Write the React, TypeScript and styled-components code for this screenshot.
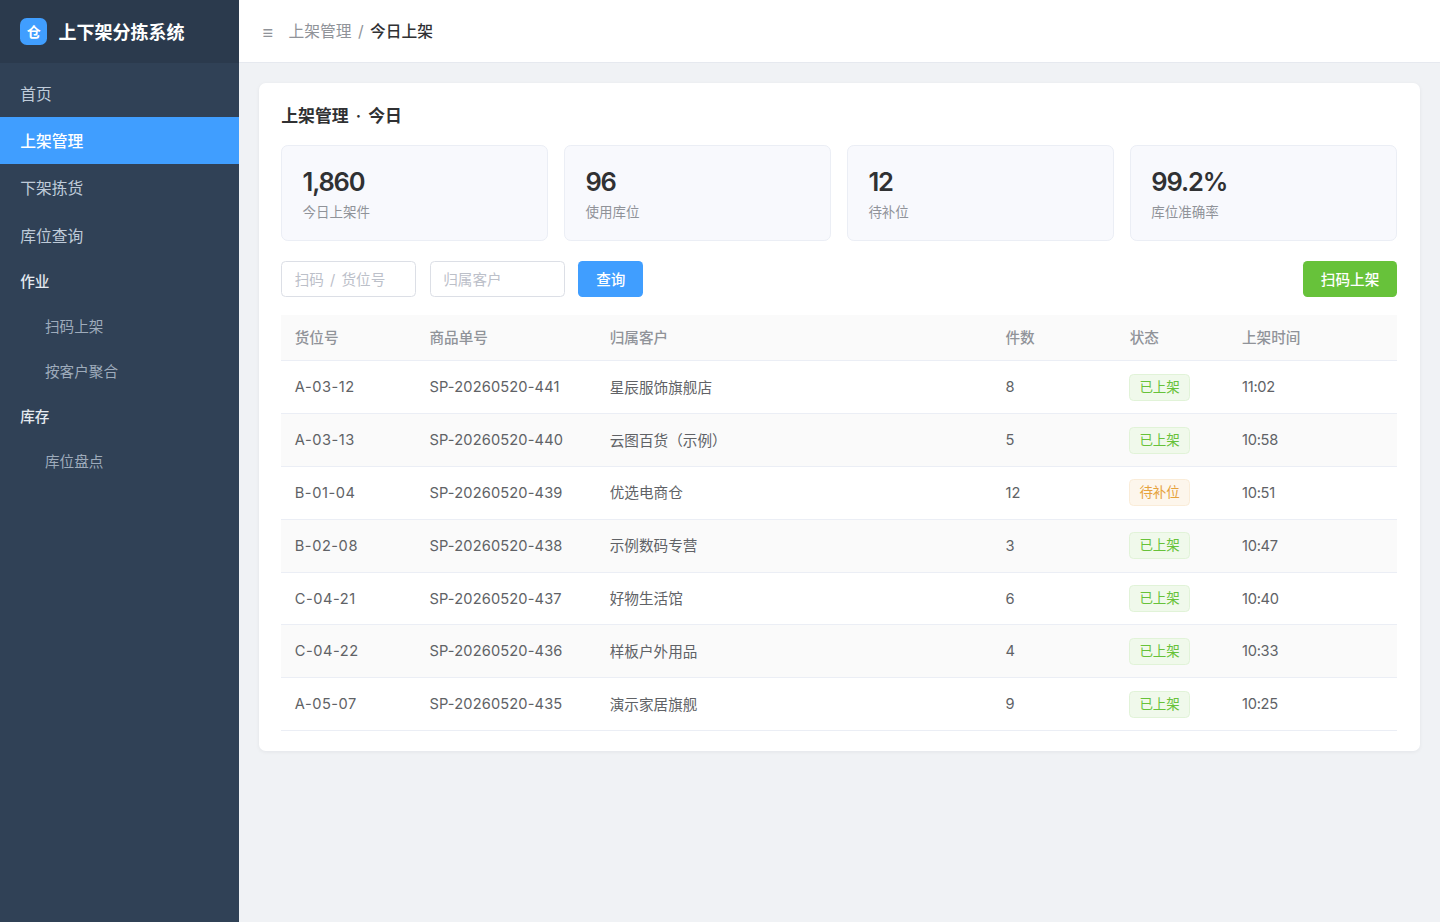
import React from 'react';
import styled, { createGlobalStyle, css } from 'styled-components';

const GlobalStyle = createGlobalStyle`
  *, *::before, *::after { box-sizing: border-box; }
  body {
    margin: 0;
    background: #f0f2f5;
    color: #303133;
    font-family: Inter, "Noto Sans CJK SC", sans-serif;
    font-size: 15.75px;
    -webkit-font-smoothing: antialiased;
  }
`;

const Layout = styled.div`
  display: flex;
  height: 922px;
  overflow: hidden;
`;

const Sidebar = styled.aside`
  flex: 0 0 238.5px;
  background: #304156;
`;

const Brand = styled.div`
  display: flex;
  align-items: center;
  gap: 11.25px;
  height: 63px;
  padding-left: 20.25px;
  background: #2b3a4d;
  color: #fff;
  font-size: 18px;
  font-weight: 600;
  line-height: 27px;
`;

const BrandName = styled.span`
  padding-top: 1.5px;
`;

const BrandMark = styled.span`
  width: 27px;
  height: 27px;
  border-radius: 6.75px;
  background: #409eff;
  font-size: 14px;
  line-height: 28.5px;
  text-align: center;
`;

const Nav = styled.nav`
  padding-top: 6.75px;
`;

type NavKind = 'item' | 'group' | 'sub';

const navKinds = {
  item: css`
    height: 47.25px;
    line-height: 49px;
    color: #bfcbd9;
    font-size: 15.75px;
  `,
  group: css`
    height: 45px;
    line-height: 47px;
    color: #e5eaf0;
    font-size: 14.625px;
    font-weight: 500;
  `,
  sub: css`
    height: 45px;
    line-height: 47px;
    padding-left: 45px;
    color: #9eabbb;
    font-size: 14.625px;
  `,
};

const NavEntry = styled.div<{ $kind: NavKind; $active?: boolean }>`
  padding-left: 20.25px;
  ${(p) => navKinds[p.$kind]}
  ${(p) =>
    p.$active &&
    css`
      background: #409eff;
      color: #fff;
      font-weight: 500;
    `}
`;

const Main = styled.main`
  flex: 1;
  min-width: 0;
`;

const TopBar = styled.header`
  display: flex;
  align-items: center;
  height: 63px;
  padding-left: 24px;
  background: #fff;
  border-bottom: 1px solid #e6e9ef;
  color: #909399;
`;

const MenuToggle = styled.span`
  width: 26px;
  font-family: "Liberation Sans", sans-serif;
  font-size: 18px;
  font-weight: 700;
  line-height: 24px;
  padding-top: 3px;
`;

const Crumbs = styled.div`
  padding-top: 2px;
  line-height: 24px;
  word-spacing: 2px;

  b {
    color: #303133;
    font-weight: 500;
  }
`;

const Card = styled.section`
  margin: 20.25px;
  padding: 20.25px 22.5px;
  background: #fff;
  border-radius: 6.75px;
  box-shadow: 0 1px 4px rgba(0, 21, 41, 0.06);
`;

const CardTitle = styled.h1`
  margin: 0 0 17.75px;
  font-size: 16.875px;
  font-weight: 600;
  line-height: 24px;
  word-spacing: 2.8px;
`;

const Stats = styled.div`
  display: grid;
  grid-template-columns: repeat(4, 1fr);
  gap: 15.75px;
  margin-bottom: 20.5px;
`;

const StatBox = styled.div`
  height: 95.5px;
  padding: 19.5px 20.25px;
  background: #f8f9fd;
  border: 1px solid #ebeef5;
  border-radius: 6.75px;
`;

const StatValue = styled.div`
  font-size: 25.5px;
  font-weight: 600;
  line-height: 32px;
  letter-spacing: -0.045em;
`;

const StatLabel = styled.div`
  margin-top: 4.5px;
  color: #909399;
  font-size: 13.5px;
  line-height: 20px;
`;

const Toolbar = styled.div`
  display: flex;
  gap: 13.5px;
  margin-bottom: 18px;
`;

const Field = styled.input`
  width: 135px;
  height: 36px;
  padding: 1px 12.5px 0;
  border: 1px solid #dcdfe6;
  border-radius: 4.5px;
  background: #fff;
  font: inherit;
  font-size: 14.625px;
  word-spacing: 2px;
  outline: none;

  &::placeholder { color: #bcc0c9; }
`;

const Button = styled.button<{ $tone: 'primary' | 'success' }>`
  height: 36px;
  padding: 0 18px 2px;
  border: 0;
  border-radius: 4.5px;
  background: ${(p) => (p.$tone === 'primary' ? '#409eff' : '#67c23a')};
  color: #fff;
  font: inherit;
  font-size: 14.625px;
  font-weight: 500;
  margin-left: ${(p) => (p.$tone === 'success' ? 'auto' : '0')};
`;

const Table = styled.table`
  width: 100%;
  table-layout: fixed;
  border-collapse: separate;
  border-spacing: 0;
  font-size: 14.625px;
`;

const Col = styled.col<{ $width?: number }>`
  width: ${(p) => (p.$width ? `${p.$width}px` : 'auto')};
`;

const HeadCell = styled.th`
  height: 46px;
  padding: 0 13.5px 2px;
  background: #fafafa;
  border-bottom: 1px solid #ebeef5;
  color: #909399;
  font-weight: 500;
  text-align: left;
`;

const Row = styled.tr`
  &:nth-child(even) { background: #fafafa; }
`;

const Cell = styled.td<{ $spacing?: number; $raise?: boolean }>`
  height: 52.85px;
  padding: 0 13.5px ${(p) => (p.$raise ? '2px' : '0')};
  border-bottom: 1px solid #ebeef5;
  color: #606266;
  letter-spacing: ${(p) => p.$spacing ?? 0}px;
`;

const Tag = styled.span<{ $pending: boolean }>`
  display: block;
  width: 60.75px;
  height: 27px;
  margin-left: -0.5px;
  border: 1px solid ${(p) => (p.$pending ? '#faecd8' : '#e1f3d8')};
  border-radius: 4.5px;
  background: ${(p) => (p.$pending ? '#fdf6ec' : '#f0f9eb')};
  color: ${(p) => (p.$pending ? '#e6a23c' : '#67c23a')};
  font-size: 13.5px;
  line-height: 25px;
  text-align: center;
`;

const navigation: { label: string; kind: NavKind; active?: boolean }[] = [
  { label: '首页', kind: 'item' },
  { label: '上架管理', kind: 'item', active: true },
  { label: '下架拣货', kind: 'item' },
  { label: '库位查询', kind: 'item' },
  { label: '作业', kind: 'group' },
  { label: '扫码上架', kind: 'sub' },
  { label: '按客户聚合', kind: 'sub' },
  { label: '库存', kind: 'group' },
  { label: '库位盘点', kind: 'sub' },
];

const stats = [
  ['1,860', '今日上架件'],
  ['96', '使用库位'],
  ['12', '待补位'],
  ['99.2%', '库位准确率'],
];

const columns: { title: string; width?: number }[] = [
  { title: '货位号', width: 134.75 },
  { title: '商品单号', width: 180.25 },
  { title: '归属客户' },
  { title: '件数', width: 124.25 },
  { title: '状态', width: 112.25 },
  { title: '上架时间', width: 168.75 },
];

const records = [
  ['A-03-12', 'SP-20260520-441', '星辰服饰旗舰店', '8', '已上架', '11:02'],
  ['A-03-13', 'SP-20260520-440', '云图百货（示例）', '5', '已上架', '10:58'],
  ['B-01-04', 'SP-20260520-439', '优选电商仓', '12', '待补位', '10:51'],
  ['B-02-08', 'SP-20260520-438', '示例数码专营', '3', '已上架', '10:47'],
  ['C-04-21', 'SP-20260520-437', '好物生活馆', '6', '已上架', '10:40'],
  ['C-04-22', 'SP-20260520-436', '样板户外用品', '4', '已上架', '10:33'],
  ['A-05-07', 'SP-20260520-435', '演示家居旗舰', '9', '已上架', '10:25'],
];

export default function App() {
  return (
    <>
      <GlobalStyle />
      <Layout>
        <Sidebar>
          <Brand>
            <BrandMark>仓</BrandMark>
            <BrandName>上下架分拣系统</BrandName>
          </Brand>
          <Nav>
            {navigation.map((n) => (
              <NavEntry key={n.label} $kind={n.kind} $active={n.active}>
                {n.label}
              </NavEntry>
            ))}
          </Nav>
        </Sidebar>
        <Main>
          <TopBar>
            <MenuToggle>≡</MenuToggle>
            <Crumbs>
              上架管理 / <b>今日上架</b>
            </Crumbs>
          </TopBar>
          <Card>
            <CardTitle>上架管理 · 今日</CardTitle>
            <Stats>
              {stats.map(([value, label]) => (
                <StatBox key={label}>
                  <StatValue>{value}</StatValue>
                  <StatLabel>{label}</StatLabel>
                </StatBox>
              ))}
            </Stats>
            <Toolbar>
              <Field placeholder="扫码 / 货位号" />
              <Field placeholder="归属客户" />
              <Button $tone="primary">查询</Button>
              <Button $tone="success">扫码上架</Button>
            </Toolbar>
            <Table>
              <colgroup>
                {columns.map((c) => (
                  <Col key={c.title} $width={c.width} />
                ))}
              </colgroup>
              <thead>
                <tr>
                  {columns.map((c) => (
                    <HeadCell key={c.title}>{c.title}</HeadCell>
                  ))}
                </tr>
              </thead>
              <tbody>
                {records.map(([slot, order, customer, count, status, time]) => (
                  <Row key={order}>
                    <Cell $spacing={0.55}>{slot}</Cell>
                    <Cell $spacing={0.15}>{order}</Cell>
                    <Cell $raise>{customer}</Cell>
                    <Cell>{count}</Cell>
                    <Cell>
                      <Tag $pending={status === '待补位'}>{status}</Tag>
                    </Cell>
                    <Cell $spacing={-0.25}>{time}</Cell>
                  </Row>
                ))}
              </tbody>
            </Table>
          </Card>
        </Main>
      </Layout>
    </>
  );
}
